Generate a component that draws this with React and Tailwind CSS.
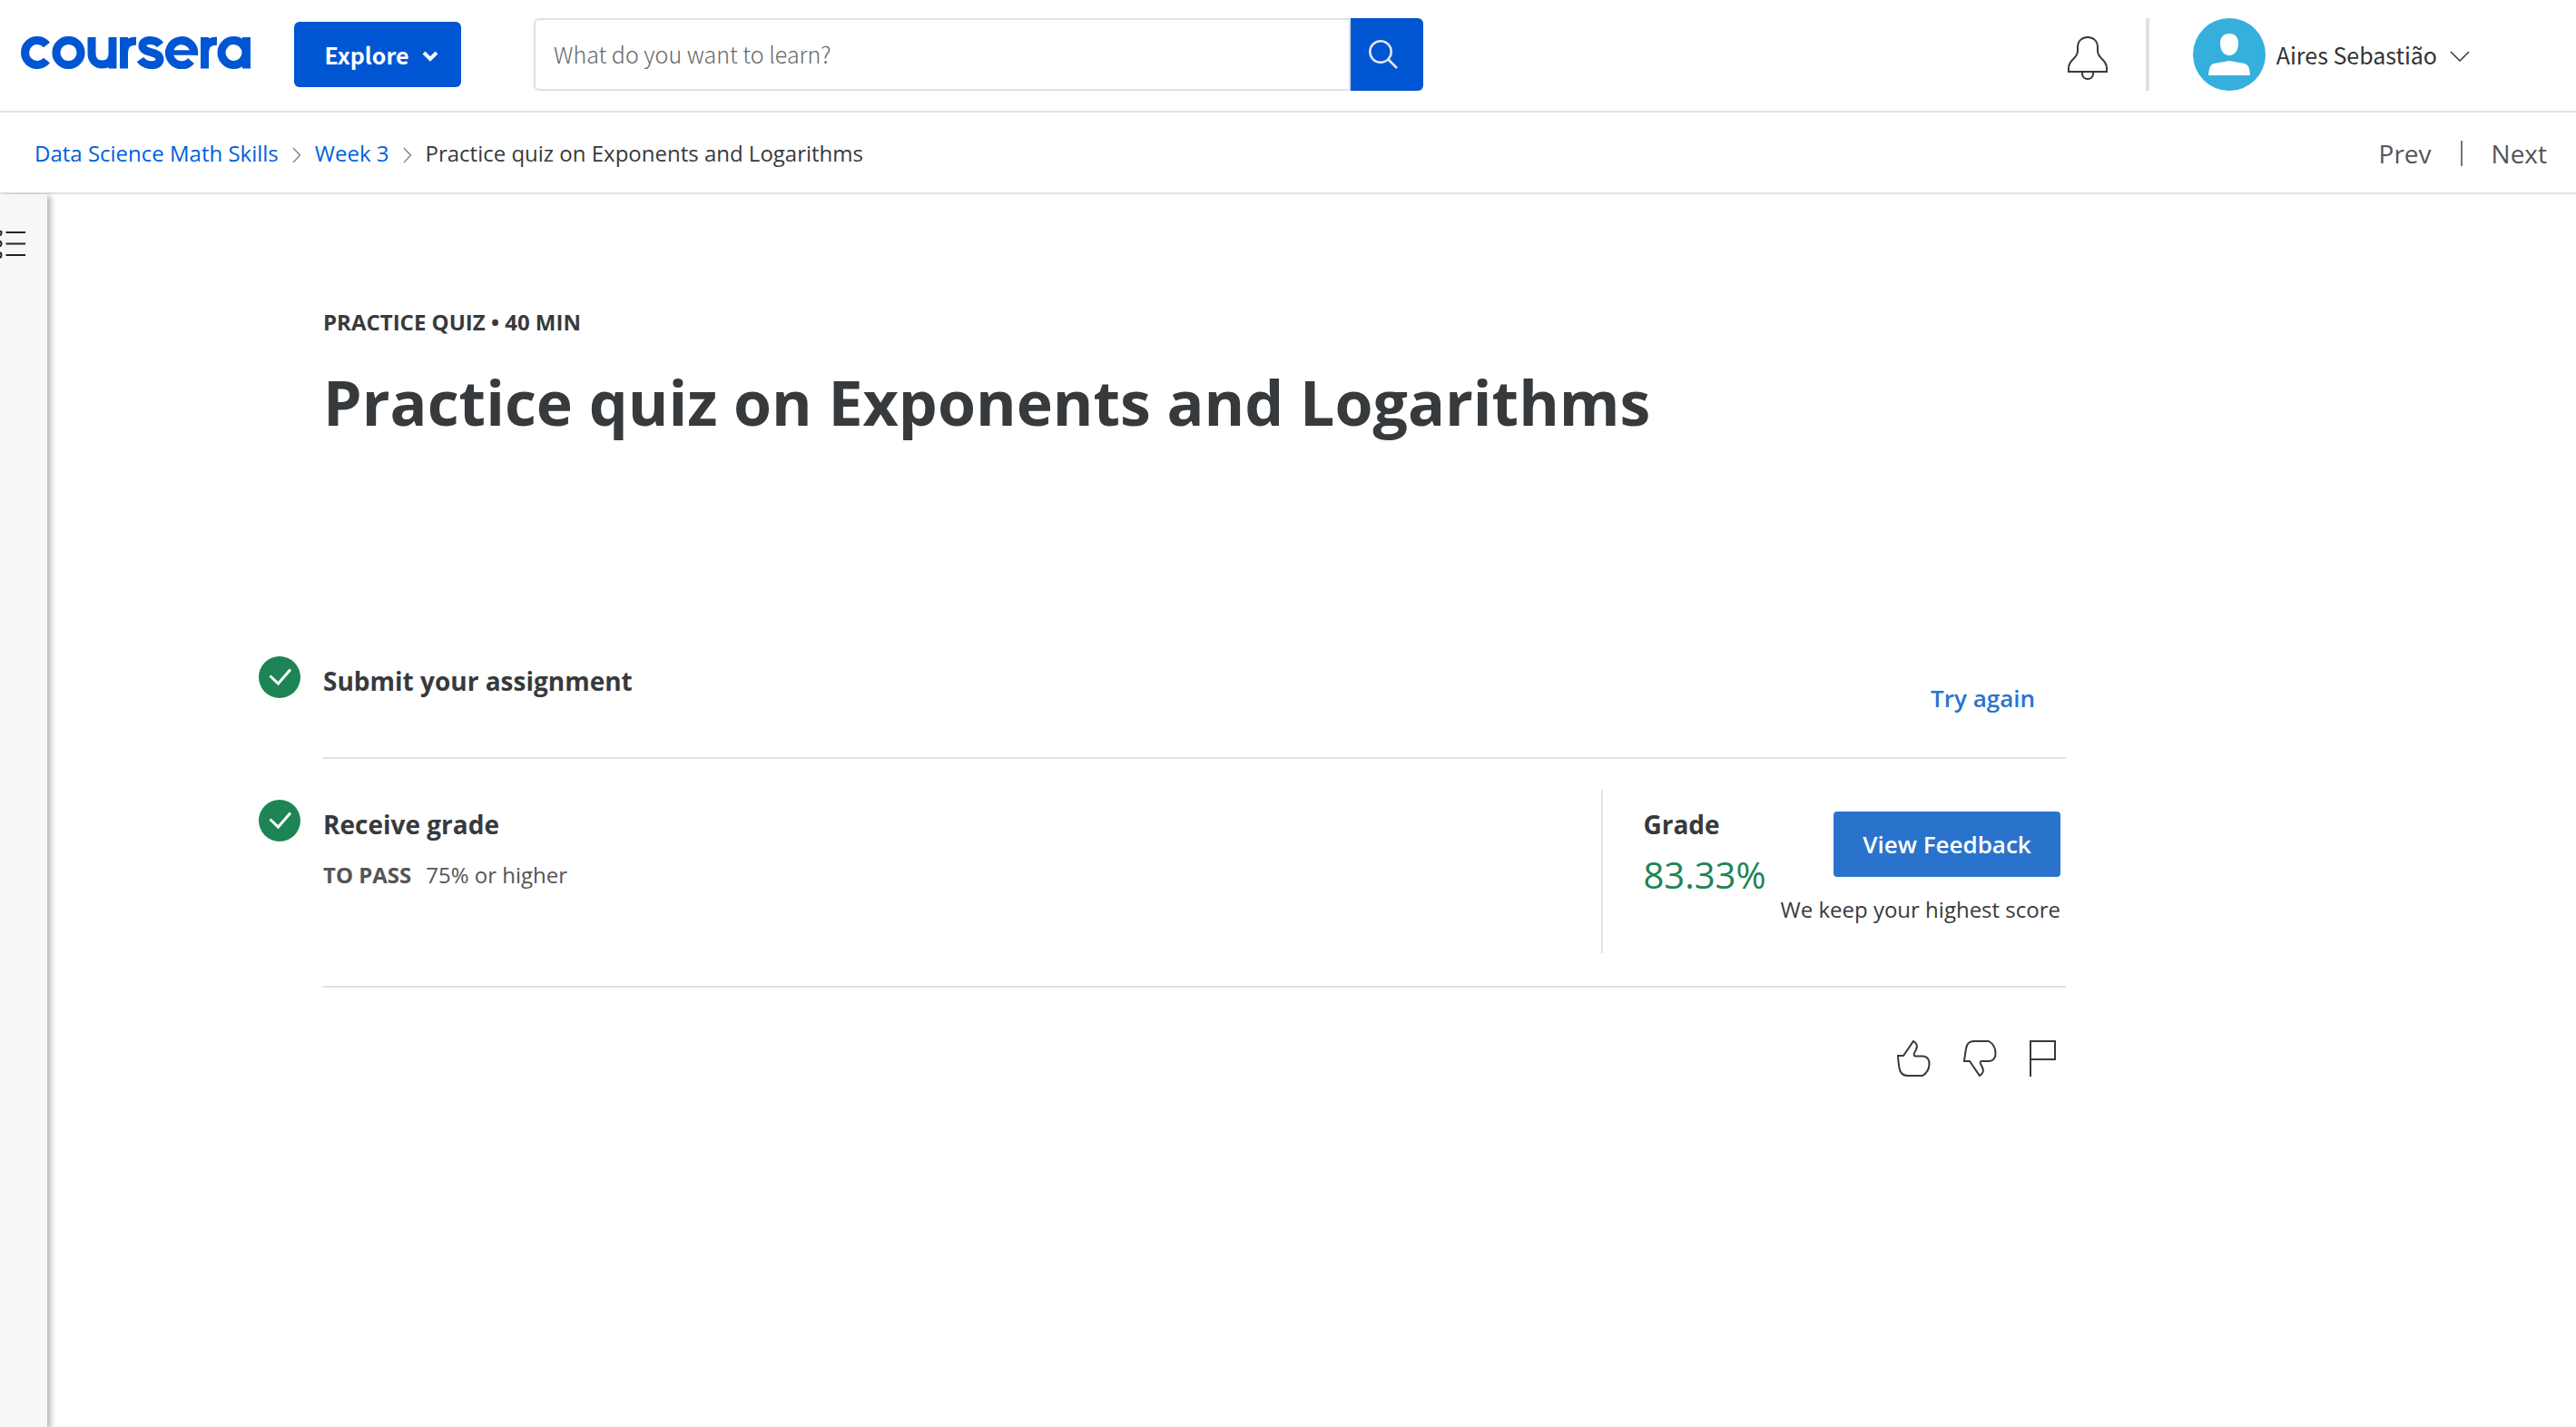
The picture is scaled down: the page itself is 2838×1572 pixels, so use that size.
import React from "react";

const LINK = "text-[#0060e0]";

function Logo() {
  return (
    <svg viewBox="0 0 254 36" className="h-9 w-[254px]" fill="none" stroke="#0056d2" strokeWidth="9" aria-hidden="true">
      <path d="M29.500 9.500 A13.500 13.500 0 1 0 29.500 26.500" />
      <circle cx="53.500" cy="18" r="13.600" />
      <path d="M79 1 V19 C79 35 102 35 102 19 V1 M102 18 V35.500" />
      <path d="M114.500 1 V35.500 M114.500 20 C114.500 9 119 5 128 5.200" />
      <path d="M154.500 9.500 C150 3.500 135 2 135 10.500 C135 19.500 154 15.500 154 25.500 C154 34 138 33.500 132.500 25.500" />
      <path d="M191.500 20.500 A13.600 13.600 0 1 0 188.500 27" />
      <path d="M166 18 H194" strokeWidth="5.500" />
      <path d="M203.500 1 V35.500 M203.500 20 C203.500 9 208 5 217 5.200" />
      <circle cx="235.500" cy="18" r="13.500" />
      <path d="M249.500 1 V35.500" />
    </svg>
  );
}

function CheckBadge() {
  return (
    <svg viewBox="0 0 46 46" className="h-[46px] w-[46px] shrink-0" role="img" aria-label="Completed">
      <circle cx="23" cy="23" r="23" fill="#1d8456" />
      <path d="M12.500 21.500 L21.500 30 L35 14.500" fill="none" stroke="#fff" strokeWidth="3" />
    </svg>
  );
}

function Crumb() {
  return (
    <svg viewBox="0 0 10 18" className="mx-[15px] mt-1 h-[18px] w-[10px]" fill="none" stroke="#8a8a8a" strokeWidth="1.500" aria-hidden="true">
      <path d="M1 1 L8.500 9 L1 17" />
    </svg>
  );
}

export default function App() {
  return (
    <div className="flex min-h-screen flex-col bg-white font-['Open_Sans',sans-serif] text-[#373a3c]">
      <header className="flex h-[124px] items-start border-b-2 border-[#e1e1e1] pt-5 pr-[117px] pl-[22px] font-['Noto_Sans_CJK_JP',sans-serif]">
        <a href="#home" aria-label="coursera" className="mt-5">
          <Logo />
        </a>
        <button className="mt-1 ml-12 flex h-[72px] w-[184px] items-center justify-center gap-3.5 rounded-md bg-[#0056d2] pl-2 text-[25px] leading-9 font-bold text-white">
          Explore
          <svg viewBox="0 0 18 12" className="mt-1 h-3 w-[18px]" fill="none" stroke="#fff" strokeWidth="4" aria-hidden="true">
            <path d="M2 2 L9 9 L16 2" />
          </svg>
        </button>
        <form className="ml-20 flex h-20 w-[980px]">
          <input aria-label="Search" placeholder="What do you want to learn?" className="min-w-0 flex-1 rounded-l-md border-2 border-[#e1e1e1] px-5 text-[25px] font-light placeholder:text-[#666]" />
          <button type="button" aria-label="Submit search" className="flex h-20 w-20 items-center justify-center rounded-r-md bg-[#0056d2]">
            <svg viewBox="0 0 32 32" className="mr-2 h-8 w-8" fill="none" stroke="#e8e8e8" strokeWidth="2.500" aria-hidden="true">
              <circle cx="13" cy="13" r="11.700" />
              <path d="M21 21 L31 31" />
            </svg>
          </button>
        </form>
        <div className="ml-auto flex h-20 items-center">
          <button aria-label="Notifications" className="pt-2">
            <svg viewBox="0 0 44 48" className="h-12 w-11" fill="none" stroke="#373a3c" strokeWidth="2" aria-hidden="true">
              <path d="M1 39 H43 V35 C43 25 33 25 33 16 V12 C33 5 28 1 22 1 C16 1 11 5 11 12 V16 C11 25 1 25 1 35 Z M16 39 V41 C16 49 28 49 28 41 V39" />
            </svg>
          </button>
          <div className="ml-[42px] h-20 w-1 bg-[#e1e1e1]" />
          <button className="ml-12 flex items-center text-[25px] leading-9 text-[#333]">
            <svg viewBox="0 0 80 80" className="h-20 w-20" aria-hidden="true">
              <circle cx="40" cy="40" r="40" fill="#35afdc" />
              <path d="M40 17 C46 17 50 21 50 27 C50 36 46 41 40 41 C34 41 30 36 30 27 C30 21 34 17 40 17 Z M17 63 C18 55 18 52 23 50 L40 47 L57 50 C62 52 62 55 63 63 Z" fill="#fff" />
            </svg>
            <span className="ml-3">Aires Sebastião</span>
            <svg viewBox="0 0 22 12" className="mt-1 ml-3.5 h-3 w-[22px]" fill="none" stroke="#373a3c" strokeWidth="1.500" aria-hidden="true">
              <path d="M1 1 L11 11 L21 1" />
            </svg>
          </button>
        </div>
      </header>

      <nav aria-label="Course" className="flex h-[90px] items-center justify-between border-b-2 border-[#e1e1e1] pt-[2px] pr-8 pl-[38px]">
        <div className="flex items-center text-2xl">
          <a href="#course" className={LINK}>Data Science Math Skills</a>
          <Crumb />
          <a href="#week" className={LINK}>Week 3</a>
          <Crumb />
          <span>Practice quiz on Exponents and Logarithms</span>
        </div>
        <div className="flex items-center text-[28px] text-[#555]">
          <a href="#prev">Prev</a>
          <div className="mx-8 h-7 w-0.5 bg-[#757575]" />
          <a href="#next">Next</a>
        </div>
      </nav>

      <div className="flex flex-1">
        <aside className="w-[52px] bg-[#f7f7f7] pt-10 shadow-[4px_2px_6px_rgba(0,0,0,0.28)]">
          <button aria-label="Open outline" className="block">
            <svg viewBox="0 0 28 32" className="h-8 w-7" fill="none" stroke="#222" strokeWidth="2" aria-hidden="true">
              <path d="M6.500 2 H28 M6.500 14.500 H28 M6.500 27 H28" />
              <circle cx="-1.500" cy="2.500" r="3" />
              <circle cx="-1.500" cy="14.500" r="3" />
              <circle cx="-1.500" cy="27" r="3" />
            </svg>
          </button>
        </aside>

        <main className="ml-[233px] max-w-[1991px] flex-1 pt-[123px]">
          <div className="pl-[71px]">
            <p className="text-2xl leading-9 font-bold">PRACTICE QUIZ • 40 MIN</p>
            <h1 className="mt-[26px] text-[68px] leading-[88px] font-bold">Practice quiz on Exponents and Logarithms</h1>
          </div>

          <section className="mt-[236px] flex gap-[25px]">
            <CheckBadge />
            <div className="flex h-[113px] flex-1 justify-between border-b-2 border-[#e1e1e1] pr-[34px]">
              <h2 className="text-[28px] leading-[54px] font-bold">Submit your assignment</h2>
              <a href="#retry" className="mt-[26px] text-[26px] leading-10 font-semibold text-[#2a73cc]">Try again</a>
            </div>
          </section>

          <section className="mt-[45px] flex gap-[25px]">
            <CheckBadge />
            <div className="flex h-[207px] flex-1 justify-between border-b-2 border-[#e1e1e1] pr-1.5">
              <div>
                <h2 className="text-[28px] leading-[54px] font-bold">Receive grade</h2>
                <p className="flex gap-4 text-2xl leading-[58px] text-[#555]">
                  <strong>TO PASS</strong>
                  <span>75% or higher</span>
                </p>
              </div>
              <div className="-mt-[11px] flex h-[180px] border-l-2 border-[#e1e1e1] pl-11">
                <div className="pt-[11px]">
                  <h3 className="text-[28px] leading-[54px] font-bold">Grade</h3>
                  <p className="text-[40px] leading-[58px] text-[#1d8456]">83.33%</p>
                </div>
                <div className="ml-4 flex flex-col items-end pt-6">
                  <button className="h-[72px] w-[250px] rounded bg-[#2a73cc] text-[26px] font-semibold text-white">View Feedback</button>
                  <p className="mt-4 text-2xl leading-10">We keep your highest score</p>
                </div>
              </div>
            </div>
          </section>

          <div className="mt-[57px] flex justify-end gap-[35px] pr-[11px]">
            <button aria-label="Like">
              <svg viewBox="0 0 38 42" className="h-[42px] w-[38px]" fill="none" stroke="#373a3c" strokeWidth="2" aria-hidden="true">
                <path d="M2 18 H8 L19 2 C25 6 23 10 20 15 C19 18 20 18.500 22 18.500 H29 C40 18.500 38 35 29 40 H13 C4 40 3 34 2 18 Z" />
              </svg>
            </button>
            <button aria-label="Dislike">
              <svg viewBox="0 0 38 42" className="h-[42px] w-[38px]" fill="none" stroke="#373a3c" strokeWidth="2" aria-hidden="true">
                <path d="M2 24 H8 L19 40 C25 36 23 32 20 27 C19 24 20 24 22 24 H29 C40 24 38 7 29 2 H13 C4 2 4 8 2 24 Z" />
              </svg>
            </button>
            <button aria-label="Flag">
              <svg viewBox="0 0 30 42" className="h-[42px] w-[30px]" fill="none" stroke="#373a3c" strokeWidth="2" aria-hidden="true">
                <path d="M2 41 V2 H29 V22 H2" />
              </svg>
            </button>
          </div>
        </main>
      </div>
    </div>
  );
}
